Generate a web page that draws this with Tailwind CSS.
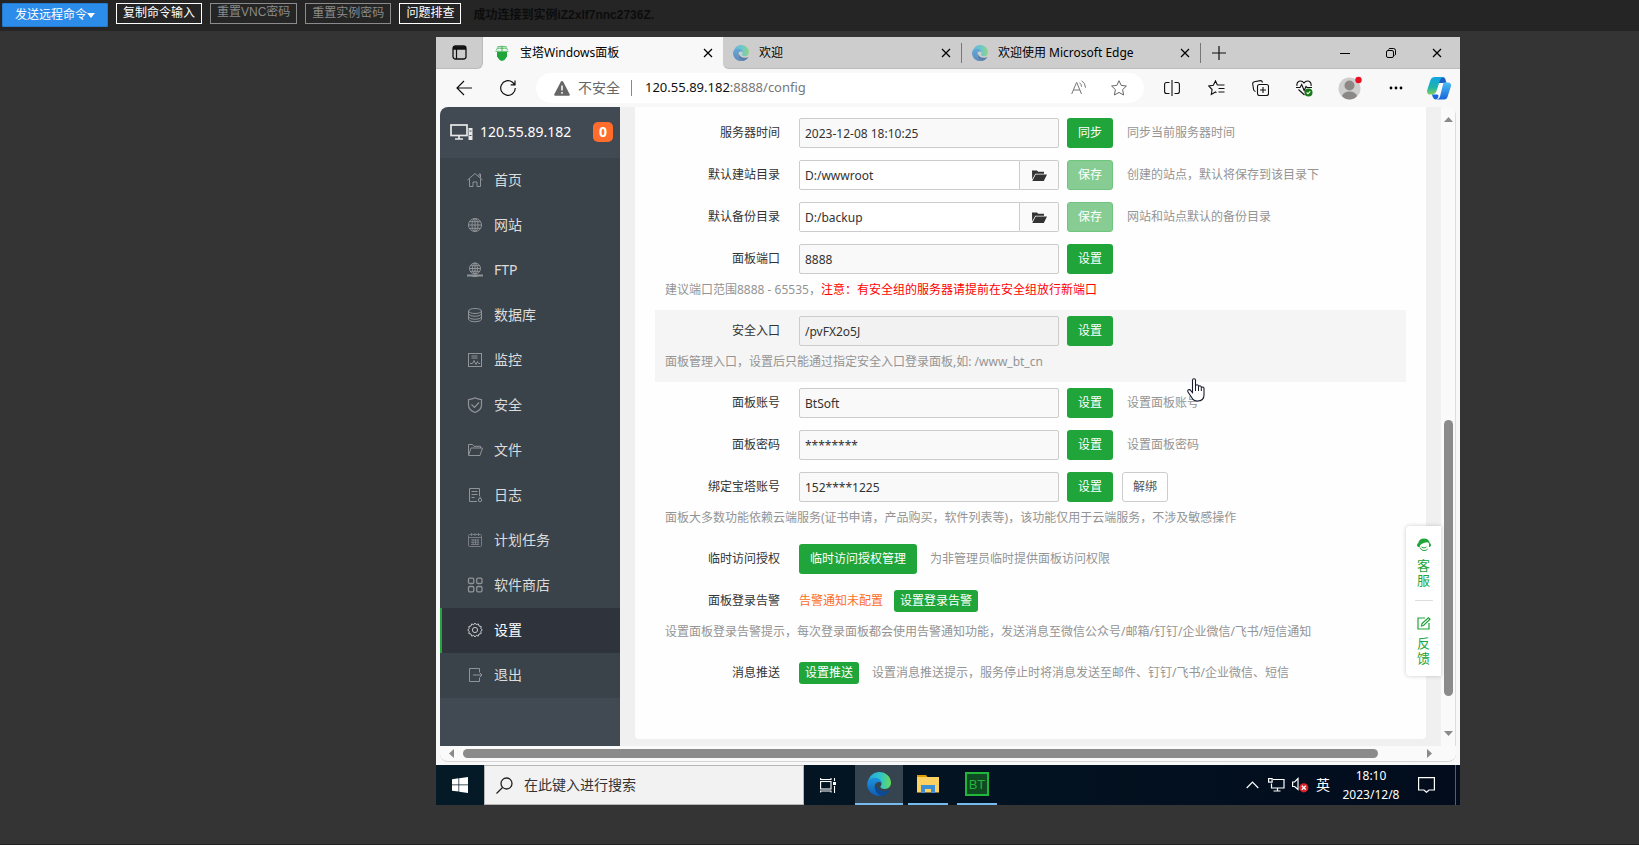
<!DOCTYPE html>
<html lang="zh-CN">
<head>
<meta charset="utf-8">
<title>远程连接 - 宝塔Windows面板</title>
<script src="https://cdn.jsdelivr.net/npm/@tailwindcss/browser@4"></script>
</head>
<body class="min-h-screen flex flex-col bg-[#343434] border-b border-[#222] font-['Noto_Sans','Noto_Sans_CJK_SC',sans-serif] text-xs text-[#333]">

<svg width="0" height="0" class="absolute" aria-hidden="true">
  <defs>
    <linearGradient id="eg1" x1="0" y1="0" x2="1" y2="0"><stop offset="0" stop-color="#2aa7e0"/><stop offset=".55" stop-color="#2fc4c8"/><stop offset="1" stop-color="#67dc55"/></linearGradient>
    <linearGradient id="eg2" x1="0" y1="0" x2="0" y2="1"><stop offset="0" stop-color="#1c93dd"/><stop offset="1" stop-color="#0f5cb4"/></linearGradient>
    <linearGradient id="cp1" x1="0" y1="0" x2="0" y2="1"><stop offset="0" stop-color="#10a5e6"/><stop offset=".6" stop-color="#1fb5a9"/><stop offset="1" stop-color="#7fcf5c"/></linearGradient>
    <linearGradient id="cp2" x1="0" y1="0" x2="0" y2="1"><stop offset="0" stop-color="#4bbdf2"/><stop offset="1" stop-color="#1664dc"/></linearGradient>
    <symbol id="edge" viewBox="0 0 24 24">
      <path fill="url(#eg1)" d="M1 9.500C2.300 4 6.700 0 12.200 0 19 0 24 5 24 10.800c0 3.600-2.700 6.200-6.200 6.200-3 0-4.400-1.300-4.400-2.200 0-.7 1.100-1.200 1.100-3 0-2.800-2.600-5-6-5C5.500 6.800 2.600 7.800 1 9.500z"/>
      <path fill="url(#eg2)" d="M.1 12.600C-.1 8.500 3.500 5.600 8 5.800c3.600.1 6.300 2.500 6.500 5.400-.7-.9-1.800-1.400-3-1.300-2.500.2-4 2.400-3.800 5 .3 4.700 3.700 7.900 7.700 9C7.700 25.300.5 20.400.1 12.600z"/>
      <path fill="#0c4a94" d="M8.300 12.300c-1.600 5.400 2 10.400 7 11.600 3-.6 5.700-2.500 7.400-5.100.3-.5-.1-.8-.6-.6-5 2.200-12.100.6-13.800-5.900z"/>
    </symbol>
    <symbol id="x" viewBox="0 0 10 10"><path d="M1 1l8 8M9 1l-8 8" fill="none" stroke="currentColor" stroke-width="1.200"/></symbol>
    <symbol id="folder-open" viewBox="0 0 16 13"><path fill="#333" d="M1 1.500h5l1.200 1.200H13v2H4.300L1.200 10.500 1 1.500zM4.700 5.600H16L12.800 12H1.300z"/></symbol>
  </defs>
</svg>

<header class="flex items-start gap-2 h-[31px] pl-[2px] pt-[3px] bg-[#252525] shrink-0 whitespace-nowrap text-white">
  <button class="flex items-center justify-center h-6 w-[106px] bg-[#2c8cea] border border-[#2579cf] rounded-[1px]">发送远程命令<svg width="8" height="5" viewBox="0 0 8 5"><path d="M0 0h8L4 5z" fill="#fff"/></svg></button>
  <button class="h-[21px] leading-[17px] pb-[2px] px-[6px] border border-white">复制命令输入</button>
  <button disabled class="h-[21px] leading-[17px] pb-[2px] px-[6px] border border-[#8a8a8a] text-[#8a8a8a] font-['Liberation_Sans','Noto_Sans_CJK_SC',sans-serif]">重置VNC密码</button>
  <button disabled class="h-[21px] leading-[17px] pb-[2px] px-[6px] border border-[#8a8a8a] text-[#8a8a8a]">重置实例密码</button>
  <button class="h-[21px] leading-[17px] pb-[2px] px-[6px] border border-white">问题排查</button>
  <p class="ml-1 leading-6 font-bold text-[#0c0c0c] font-['Liberation_Sans','Noto_Sans_CJK_SC',sans-serif]">成功连接到实例iZ2xlf7nnc2736Z.</p>
</header>

<div class="relative mt-[6px] ml-[436px] mr-[179px] flex flex-col bg-[#f8f8f8]">

  <!-- Tab strip -->
  <div class="flex h-8 bg-[#f8f8f8] text-black">
    <button aria-label="标签页操作" class="w-[47px] flex items-center justify-center bg-[#cdcdcd] rounded-br-md border-b border-r border-[#bbb]"><svg width="15" height="15" viewBox="0 0 15 15" fill="none" stroke="#111"><rect x="1" y="1" width="13" height="13" rx="2.500" stroke-width="1.300"/><path d="M1 3h13" stroke-width="3.500"/><path d="M4.500 4v10" stroke-width="1.200"/></svg></button>
    <div class="flex items-center w-60 pl-3 pr-[10px]">
      <svg width="14" height="16" viewBox="0 0 14 16"><path fill="#20a53a" d="M2 7h10v4.500L9.500 15 7 16 4.500 15 2 11.500z"/><path d="M1 4.500Q4 2 7 3.500 10 2 13 4.500M2 2.200Q5 .7 7 2 9 .7 12 2.200M.5 6.300h13M7 .500V7" fill="none" stroke="#4fb862"/></svg>
      <span class="ml-[11px] flex-1">宝塔Windows面板</span>
      <button aria-label="关闭标签页"><svg width="10" height="10"><use href="#x"/></svg></button>
    </div>
    <div class="flex items-center flex-1 bg-[#cdcdcd] rounded-bl-md border-b border-[#bbb]">
      <div class="flex items-center w-[239px] h-5 pl-[10px] pr-[10px] border-r border-[#777]">
        <svg width="16" height="16" class="opacity-60"><use href="#edge"/></svg><span class="ml-[10px] flex-1">欢迎</span>
        <button aria-label="关闭标签页"><svg width="10" height="10"><use href="#x"/></svg></button>
      </div>
      <div class="flex items-center w-[239px] h-5 pl-[10px] pr-[10px] border-r border-[#777] whitespace-nowrap">
        <svg width="16" height="16" class="opacity-60"><use href="#edge"/></svg><span class="ml-[10px] flex-1">欢迎使用 Microsoft Edge</span>
        <button aria-label="关闭标签页"><svg width="10" height="10"><use href="#x"/></svg></button>
      </div>
      <button aria-label="新建标签页" class="ml-[11px]"><svg width="14" height="14" viewBox="0 0 14 14"><path d="M7 0v14M0 7h14" stroke="#111" stroke-width="1.200"/></svg></button>
      <div class="ml-auto flex items-center gap-9 pr-[18px]">
        <button aria-label="最小化"><svg width="10" height="10"><path d="M0 5.500h10" stroke="#000"/></svg></button>
        <button aria-label="还原"><svg width="10" height="10" viewBox="0 0 10 10" fill="none" stroke="#000"><rect x=".5" y="2.500" width="7" height="7" rx="1.500"/><path d="M2.500 1.500q.3-1 1.500-1h3.500q2 0 2 2V6q0 1-1 1.500"/></svg></button>
        <button aria-label="关闭"><svg width="10" height="10"><use href="#x"/></svg></button>
      </div>
    </div>
  </div>

  <!-- Address bar -->
  <div class="flex items-center h-[38px] pr-[9px] text-[#111]">
    <button aria-label="返回" class="ml-5"><svg width="16" height="16" viewBox="0 0 16 16" fill="none" stroke="currentColor" stroke-width="1.200"><path d="M16 8H1M8 1L1 8l7 7"/></svg></button>
    <button aria-label="刷新" class="ml-7"><svg width="16" height="16" viewBox="0 0 16 16" fill="none" stroke="currentColor" stroke-width="1.200"><path d="M15.300 8A7.300 7.300 0 1 1 12.500 2.300L14.700 4.500M15 .5v4.300h-4.300"/></svg></button>
    <div class="flex items-center flex-1 ml-5 h-[30px] rounded-full bg-white pl-[18px] pr-[17px]">
      <svg width="16" height="15" viewBox="0 0 16 15"><path d="M8 0q.8 0 1.200.7l6.500 12.500q.5 1.300-.9 1.600H1.200Q-.2 14.500.3 13.200L6.800.7Q7.200 0 8 0z" fill="#666"/><path d="M8 4.500v5M8 11v1.700" stroke="#fff" stroke-width="1.500"/></svg>
      <span class="ml-2 text-sm text-[#666]">不安全</span>
      <span class="ml-[11px] w-px h-4 bg-[#888]"></span>
      <div role="textbox" aria-label="地址" class="ml-[13px] flex-1 text-[13px]">120.55.89.182<span class="text-[#777]">:8888/config</span></div>
      <button aria-label="朗读此页内容"><svg width="16" height="16" viewBox="0 0 16 16" fill="none" stroke="#777"><path d="M.7 14L5.500 2.500h.3L10.500 14M2.300 10H9M8.500 2.700q2 1.500 2 4M10.500.7q4 2.500 4 7"/></svg></button>
      <button aria-label="收藏" class="ml-6"><svg width="16" height="16" viewBox="0 0 16 16" fill="none" stroke="#666" stroke-linejoin="round"><path d="M8 .7l2.200 4.700 5.200.6-3.800 3.600 1 5.400L8 12.400 3.400 15l1-5.400L.6 6l5.200-.6z"/></svg></button>
    </div>
    <div class="flex items-center gap-7 ml-5 shrink-0">
      <button aria-label="拆分屏幕"><svg width="16" height="16" viewBox="0 0 16 16" fill="none" stroke="currentColor" stroke-width="1.100"><path d="M8 0v16M5.500 2.500h-3q-1.900 0-1.900 2v7q0 2 1.900 2h3M10.500 2.500h3q1.900 0 1.900 2v7q0 2-1.900 2h-3"/></svg></button>
      <button aria-label="收藏夹"><svg width="17" height="16" viewBox="0 0 17 16" fill="none" stroke="currentColor" stroke-width="1.100"><path d="M9.500 5.300L7.500.9 5.300 5.300.7 6l3.400 3.500-.8 5L7.500 12l1 .6M9.500 5h7M10.500 8.500h6M10.500 12h6"/></svg></button>
      <button aria-label="集锦" class="-ml-px"><svg width="17" height="16" viewBox="0 0 17 16" fill="none" stroke="currentColor" stroke-width="1.100"><rect x="5.500" y="4.500" width="11" height="11" rx="2"/><path d="M11 7v6M8 10h6M3.500 11.500Q1.800 11 1.600 9.500L.7 4Q.5 2.200 2.300 1.800L8.500.6q1.500-.1 2 1.900"/></svg></button>
      <button aria-label="浏览器概要" class="-ml-px mr-[2px]"><svg width="17" height="17" viewBox="0 0 17 17" fill="none" stroke="currentColor" stroke-width="1.100"><path d="M1 6Q.3 2.500 3 1.200 6 .2 8 3 10 .2 13 1.200q2.700 1.300 2 4.800M0 7.500h4l1.700-3 2.500 6 1.800-4 1 1h5M2.500 9.500L8.500 15"/><circle cx="12.500" cy="12.500" r="4" fill="#177a17" stroke="none"/><path d="M10.700 12.500l1.300 1.300 2.300-2.500" stroke="#fff"/></svg></button>
      <button aria-label="用户" class="-ml-[5px] -mr-px"><svg width="24" height="24" viewBox="0 0 24 24"><circle cx="11.500" cy="12.500" r="11" fill="#d0cecc"/><circle cx="11.500" cy="9.500" r="5" fill="#8b8886"/><path d="M4 20q1.500-4.500 7.500-4.500T19 20q-3 3.500-7.500 3.500T4 20z" fill="#8b8886"/><circle cx="20.500" cy="4" r="3.200" fill="#e81123"/></svg></button>
      <button aria-label="设置及其他"><svg width="14" height="4"><circle cx="2" cy="2" r="1.400"/><circle cx="7" cy="2" r="1.400"/><circle cx="12" cy="2" r="1.400"/></svg></button>
      <button aria-label="Copilot" class="-ml-1"><svg width="24" height="23" viewBox="0 0 24 23"><path fill="#1b5fc4" d="M12 0h4q1.700.3 2.300 2l1.200 4H12z"/><path fill="url(#cp2)" d="M16.500 5.500h5Q24.500 6 24 9l-3.500 11q-.8 2.500-3.500 2.500H9q3 0 4-3z"/><path fill="url(#cp1)" d="M8 0h9q-3.300.5-4.300 4L9.500 14q-.8 3-3.500 3.500H2.500Q-.5 17 .2 13L3.500 3Q4.500 0 8 0z"/><path fill="#1667dd" d="M5 17.500h5q2 0 1.300 2.500-.8 2.500-3 2.500Q6 22 5 17.500z"/></svg></button>
    </div>
  </div>

  <!-- Page viewport -->
  <div class="mx-1 mb-1 rounded-lg overflow-hidden border-b border-[#d5d5d5] bg-[#fafafa]">
    <div class="flex">
      <nav class="w-[180px] shrink-0 bg-[#414953] text-sm text-[#dcdcdc]">
        <div class="flex items-center h-[51px] pb-[2px] pl-[10px] pr-[7px] text-white">
          <svg width="23" height="16" viewBox="0 0 23 16" fill="none" stroke="#e8e8e8" stroke-width="1.700"><rect x="1" y="1" width="16" height="10.500"/><path d="M9 11.500V15M5 15h8"/><rect x="18.500" y="4" width="4" height="12" fill="#e8e8e8" stroke="none"/><path d="M19.500 7h2M19.500 11.500h2" stroke="#414953" stroke-width="1"/></svg>
          <span class="ml-[7px]">120.55.89.182</span>
          <span class="ml-auto w-5 h-5 rounded-[5px] bg-[#ff6c2b] text-center leading-5 font-bold">0</span>
        </div>
        <ul class="bg-[#3b434a]">
          <li><a href="#home" class="flex items-center gap-[11px] h-[45px] pb-[2px] pl-[27px]"><svg width="16" height="16" viewBox="0 0 16 16" fill="none" stroke="#8f9498"><path d="M.5 8L8 1.500 15.500 8M2.500 7v7.500h3.500V10h4v4.500h3.500V7M12 4.500V2h1.500v4"/></svg>首页</a></li>
          <li><a href="#site" class="flex items-center gap-[11px] h-[45px] pb-[2px] pl-[27px]"><svg width="16" height="16" viewBox="0 0 16 16" fill="none" stroke="#8f9498"><circle cx="8" cy="8" r="6.500"/><ellipse cx="8" cy="8" rx="3" ry="6.500"/><path d="M8 1.500v13M1.500 8h13M2.500 4.700h11M2.500 11.300h11"/></svg>网站</a></li>
          <li><a href="#ftp" class="flex items-center gap-[11px] h-[45px] pb-[2px] pl-[27px]"><svg width="16" height="16" viewBox="0 0 16 16" fill="none" stroke="#8f9498"><circle cx="8" cy="6.500" r="5.500"/><ellipse cx="8" cy="6.500" rx="2.500" ry="5.500"/><path d="M8 1v11M2.500 6.500h11M3.500 3.700h9M3.500 9.300h9"/><path d="M0 13.500h16M5.500 14h5" stroke-width="1.800"/></svg>FTP</a></li>
          <li><a href="#database" class="flex items-center gap-[11px] h-[45px] pb-[2px] pl-[27px]"><svg width="16" height="16" viewBox="0 0 16 16" fill="none" stroke="#8f9498"><ellipse cx="8" cy="4" rx="6.500" ry="2.500"/><path d="M1.500 4v8.500Q3 14.800 8 14.800t6.500-2.300V4M1.500 7Q3 9.300 8 9.300T14.500 7M1.500 10Q3 12.300 8 12.300t6.500-2.300"/></svg>数据库</a></li>
          <li><a href="#control" class="flex items-center gap-[11px] h-[45px] pb-[2px] pl-[27px]"><svg width="16" height="16" viewBox="0 0 16 16" fill="none" stroke="#8f9498"><rect x="1.500" y="1.500" width="13" height="13"/><path d="M4.500 4h6M4.500 6h6M3 11.500h2.500l1.500-3 2 4 1.500-3 1 2H13"/></svg>监控</a></li>
          <li><a href="#firewall" class="flex items-center gap-[11px] h-[45px] pb-[2px] pl-[27px]"><svg width="16" height="16" viewBox="0 0 16 16" fill="none" stroke="#8f9498" stroke-width="1.200"><path d="M8 .7l2 1 4.500 1V8q0 5-6.500 7.500Q1.500 13 1.500 8V2.700L6 1.700zM4.500 7.500l3 3L12 5.500"/></svg>安全</a></li>
          <li><a href="#files" class="flex items-center gap-[11px] h-[45px] pb-[2px] pl-[27px]"><svg width="16" height="16" viewBox="0 0 16 16" fill="none" stroke="#8f9498"><path d="M1.500 13V2.500h4L7 4.300h6.500V6M1.500 13.500L4 6h11.500L13 13.500z"/></svg>文件</a></li>
          <li><a href="#logs" class="flex items-center gap-[11px] h-[45px] pb-[2px] pl-[27px]"><svg width="16" height="16" viewBox="0 0 16 16" fill="none" stroke="#8f9498"><path d="M10 14.500H2.500v-13h10V9M4.500 4.500h6M4.500 7.500h6M4.500 10.500h3"/><circle cx="13" cy="13" r="1.700"/><path d="M13 9.500v1.500"/></svg>日志</a></li>
          <li><a href="#crontab" class="flex items-center gap-[11px] h-[45px] pb-[2px] pl-[27px]"><svg width="16" height="16" viewBox="0 0 16 16" fill="none" stroke="#777d82"><rect x="1.500" y="2.500" width="13" height="12" rx="1"/><path d="M1.500 5.500h13M4.500 1v3M11.500 1v3M8 1v3M4 8h8M4 10.300h8M4 12.500h8M6 7v6M8.500 7v6M11 7v6"/></svg>计划任务</a></li>
          <li><a href="#soft" class="flex items-center gap-[11px] h-[45px] pb-[2px] pl-[27px]"><svg width="16" height="16" viewBox="0 0 16 16" fill="none" stroke="#8f9498" stroke-width="1.300"><rect x="1.500" y="1.200" width="5.300" height="5.300" rx="1.300"/><rect x="9.700" y="1.200" width="5.300" height="5.300" rx="1.300"/><rect x="1.500" y="9.500" width="5.300" height="5.300" rx="1.300"/><rect x="9.700" y="9.500" width="5.300" height="5.300" rx="1.300"/></svg>软件商店</a></li>
          <li><a href="#config" aria-current="page" class="flex items-center gap-[11px] h-[45px] pb-[2px] pl-[25px] border-l-2 border-[#20a53a] bg-[#2f343c] text-white"><svg width="16" height="16" viewBox="0 0 16 16" fill="none" stroke="#c5c8ca"><path d="M8 1l1.300 1.700 2-.8.700 2.100 2.200.5-.4 2.200L15.300 8l-1.500 1.300.4 2.200-2.200.5-.7 2.100-2-.8L8 15l-1.300-1.700-2 .8L4 12l-2.200-.5.4-2.200L.7 8l1.500-1.300-.4-2.200L4 4l.7-2.100 2 .8z"/><circle cx="8" cy="8" r="2.600"/></svg>设置</a></li>
          <li><a href="#exit" class="flex items-center gap-[11px] h-[45px] pb-[2px] pl-[27px]"><svg width="16" height="16" viewBox="0 0 16 16" fill="none" stroke="#8f9498"><path d="M12.500 5V1.500h-10v13h10V11M6 8h9M12.500 5.500L15 8l-2.500 2.500"/></svg>退出</a></li>
        </ul>
      </nav>

      <div class="relative flex-1 min-w-0 bg-[#f0f0f0] pl-[15px] pr-[15px] pb-[7px] flex">
        <form class="flex-1 min-w-0 bg-[#fefefe] rounded-b px-5 pt-[5px] pb-[45px] leading-5 text-[#333] whitespace-nowrap">
          <div class="flex items-center h-[42px]">
            <label for="time" class="w-[125px] mr-[19px] text-right">服务器时间</label>
            <input id="time" readonly value="2023-12-08 18:10:25" class="w-[260px] h-[30px] px-[5px] border border-[#ccc] rounded-[2px] bg-[#f9f9f9]">
            <button type="button" class="ml-2 h-[30px] w-[46px] rounded-[3px] bg-[#20a53a] text-white">同步</button>
            <span class="ml-[14px] text-[#949494]">同步当前服务器时间</span>
          </div>
          <div class="flex items-center h-[42px]">
            <label for="www" class="w-[125px] mr-[19px] text-right">默认建站目录</label>
            <input id="www" value="D:/wwwroot" class="w-[221px] h-[30px] px-[5px] border border-[#ccc] rounded-l-[2px] bg-white">
            <button type="button" aria-label="选择目录" class="w-[39px] h-[30px] flex items-center justify-center border border-l-0 border-[#ccc] rounded-r-[2px] bg-[#fafafa]"><svg width="16" height="13"><use href="#folder-open"/></svg></button>
            <button type="button" class="ml-2 h-[30px] w-[46px] rounded-[3px] bg-[#87cd93] border border-[#6fc57e] text-white">保存</button>
            <span class="ml-[14px] text-[#949494]">创建的站点，默认将保存到该目录下</span>
          </div>
          <div class="flex items-center h-[42px]">
            <label for="backup" class="w-[125px] mr-[19px] text-right">默认备份目录</label>
            <input id="backup" value="D:/backup" class="w-[221px] h-[30px] px-[5px] border border-[#ccc] rounded-l-[2px] bg-white">
            <button type="button" aria-label="选择目录" class="w-[39px] h-[30px] flex items-center justify-center border border-l-0 border-[#ccc] rounded-r-[2px] bg-[#fafafa]"><svg width="16" height="13"><use href="#folder-open"/></svg></button>
            <button type="button" class="ml-2 h-[30px] w-[46px] rounded-[3px] bg-[#87cd93] border border-[#6fc57e] text-white">保存</button>
            <span class="ml-[14px] text-[#949494]">网站和站点默认的备份目录</span>
          </div>
          <div class="flex items-center h-[42px]">
            <label for="port" class="w-[125px] mr-[19px] text-right">面板端口</label>
            <input id="port" readonly value="8888" class="w-[260px] h-[30px] px-[5px] border border-[#ccc] rounded-[2px] bg-[#f9f9f9]">
            <button type="button" class="ml-2 h-[30px] w-[46px] rounded-[3px] bg-[#20a53a] text-white">设置</button>
          </div>
          <p class="pl-[10px] h-[30px] text-[#949494]">建议端口范围8888 - 65535，<span class="text-[#f00]">注意：有安全组的服务器请提前在安全组放行新端口</span></p>
          <div class="bg-[#f5f5f5]">
            <div class="flex items-center h-[42px]">
              <label for="entry" class="w-[125px] mr-[19px] text-right">安全入口</label>
              <input id="entry" readonly value="/pvFX2o5J" class="w-[260px] h-[30px] px-[5px] border border-[#ccc] rounded-[2px] bg-[#f2f2f2]">
              <button type="button" class="ml-2 h-[30px] w-[46px] rounded-[3px] bg-[#20a53a] text-white">设置</button>
            </div>
            <p class="pl-[10px] h-[30px] text-[#949494]">面板管理入口，设置后只能通过指定安全入口登录面板,如: /www_bt_cn</p>
          </div>
          <div class="flex items-center h-[42px]">
            <label for="user" class="w-[125px] mr-[19px] text-right">面板账号</label>
            <input id="user" readonly value="BtSoft" class="w-[260px] h-[30px] px-[5px] border border-[#ccc] rounded-[2px] bg-[#f9f9f9]">
            <button type="button" class="ml-2 h-[30px] w-[46px] rounded-[3px] bg-[#20a53a] text-white">设置</button>
            <span class="ml-[14px] text-[#949494]">设置面板账号</span>
          </div>
          <div class="flex items-center h-[42px]">
            <label for="pass" class="w-[125px] mr-[19px] text-right">面板密码</label>
            <input id="pass" readonly value="********" class="w-[260px] h-[30px] px-[5px] border border-[#ccc] rounded-[2px] bg-[#f9f9f9]">
            <button type="button" class="ml-2 h-[30px] w-[46px] rounded-[3px] bg-[#20a53a] text-white">设置</button>
            <span class="ml-[14px] text-[#949494]">设置面板密码</span>
          </div>
          <div class="flex items-center h-[42px]">
            <label for="bind" class="w-[125px] mr-[19px] text-right">绑定宝塔账号</label>
            <input id="bind" readonly value="152****1225" class="w-[260px] h-[30px] px-[5px] border border-[#ccc] rounded-[2px] bg-[#f9f9f9]">
            <button type="button" class="ml-2 h-[30px] w-[46px] rounded-[3px] bg-[#20a53a] text-white">设置</button>
            <button type="button" class="ml-[9px] h-[30px] w-[46px] rounded-[3px] border border-[#ccc] bg-white text-[#555]">解绑</button>
          </div>
          <p class="pl-[10px] h-[30px] text-[#949494]">面板大多数功能依赖云端服务(证书申请，产品购买，软件列表等)，该功能仅用于云端服务，不涉及敏感操作</p>
          <div class="flex items-center h-[42px]">
            <span class="w-[125px] mr-[19px] text-right">临时访问授权</span>
            <button type="button" class="h-[30px] px-[11px] rounded-[3px] bg-[#20a53a] text-white">临时访问授权管理</button>
            <span class="ml-[13px] text-[#949494]">为非管理员临时提供面板访问权限</span>
          </div>
          <div class="flex items-center h-[42px]">
            <span class="w-[125px] mr-[19px] text-right">面板登录告警</span>
            <a href="#alarm" class="text-[#fc6d26]">告警通知未配置</a>
            <button type="button" class="ml-[11px] h-[22px] px-[6px] rounded-[3px] bg-[#20a53a] text-white">设置登录告警</button>
          </div>
          <p class="pl-[10px] h-[30px] text-[#949494]">设置面板登录告警提示，每次登录面板都会使用告警通知功能，发送消息至微信公众号/邮箱/钉钉/企业微信/飞书/短信通知</p>
          <div class="flex items-center h-[42px]">
            <span class="w-[125px] mr-[19px] text-right">消息推送</span>
            <button type="button" class="h-[22px] px-[6px] rounded-[3px] bg-[#20a53a] text-white">设置推送</button>
            <span class="ml-[13px] text-[#949494]">设置消息推送提示，服务停止时将消息发送至邮件、钉钉/飞书/企业微信、短信</span>
          </div>
        </form>

        <!-- Floating help panel -->
        <aside class="absolute right-0 bottom-[70px] w-[35px] h-[150px] flex flex-col items-center bg-white rounded-l shadow-[0_0_4px_rgba(0,0,0,0.2)] text-[13px] leading-[15px] text-[#20a53a]">
          <a href="#service" class="flex flex-col items-center w-[14px] pt-3"><svg width="14" height="14" viewBox="0 0 14 14"><path fill="#20a53a" d="M7 .5c3.300 0 5.400 2 5.800 4.700q1.200.3 1.200 1.800t-1.400 1.900l-.8.100q1-4-1.300-4.700Q7 4.500 4.500 6 2.700 7 2.700 9L1.300 9Q0 8.500 0 7t1.200-1.800C1.700 2.500 3.700.5 7 .5z"/><path d="M3 9.500Q4.300 12.600 7 12.600q2.300 0 3.700-1.600M4.500 9q2.500 2 5 0" fill="none" stroke="#20a53a"/></svg><span class="mt-[6px] w-[13px] whitespace-normal break-all">客服</span></a>
          <span class="mt-3 w-[18px] h-px bg-[#ddd] shrink-0"></span>
          <a href="#feedback" class="flex flex-col items-center w-[14px] pt-4"><svg width="14" height="13" viewBox="0 0 14 13" fill="none" stroke="#20a53a" stroke-width="1.200"><path d="M8 1H1v11h11V6M5 6.500L11.500.8l1.500 1.500L6.500 8.500l-2 .5z"/></svg><span class="mt-[6px] w-[13px] whitespace-normal break-all">反馈</span></a>
        </aside>
      </div>

      <!-- Vertical scrollbar -->
      <div class="w-[15px] shrink-0 flex flex-col items-center pt-[10px] pb-[10px] bg-[#fafafa] border-r border-[#ddd]">
        <svg width="9" height="5"><path d="M0 5L4.500 0 9 5z" fill="#8a8a8a"/></svg>
        <div class="mt-[298px] h-[276px] w-[9px] rounded-full bg-[#8b8b8b]"></div>
        <svg class="mt-auto" width="9" height="5"><path d="M0 0h9L4.500 5z" fill="#8a8a8a"/></svg>
      </div>
    </div>
    <!-- Horizontal scrollbar -->
    <div class="flex items-center h-[15px] pl-[9px] pr-6">
      <svg width="5" height="9"><path d="M5 0v9L0 4.500z" fill="#8a8a8a"/></svg>
      <div class="ml-[9px] mr-[49px] flex-1 h-[9px] rounded-full bg-[#8b8b8b]"></div>
      <svg width="5" height="9"><path d="M0 0v9l5-4.500z" fill="#8a8a8a"/></svg>
    </div>
  </div>

  <!-- Taskbar -->
  <footer class="flex h-10 -mt-px bg-linear-to-r from-[#041a26] to-[#020c1c] text-white">
    <button aria-label="开始" class="w-12 flex items-center justify-center"><svg width="16" height="16" viewBox="0 0 16 16" fill="#fff"><path d="M0 2.200L6.500 1.300v6.200H0zM7.200 1.200L16 0v7.500H7.200zM0 8.300h6.500v6.200L0 13.700zM7.200 8.300H16V16l-8.800-1.300z"/></svg></button>
    <label class="flex items-center w-80 pl-[11px] bg-[#f2f2f2] border border-[#b5b5b5]">
      <svg width="17" height="17" viewBox="0 0 17 17" fill="none" stroke="#222" stroke-width="1.300"><circle cx="10.500" cy="6.500" r="5.500"/><path d="M6.500 10.500L.5 16.500"/></svg>
      <input aria-label="搜索" placeholder="在此键入进行搜索" class="ml-[11px] min-w-0 flex-1 text-sm placeholder:text-[#333]">
    </label>
    <button aria-label="任务视图" class="ml-4 flex items-center"><svg width="17" height="16" viewBox="0 0 17 16" fill="none" stroke="#fff" stroke-width="1.100"><rect x=".6" y="4.500" width="10.400" height="7.500"/><path d="M.6 1v1.500H11V1M.6 15.500V14H11v1.500M14.500 1v3M14.500 9v7"/><path d="M13 5h3v3h-3z" fill="#fff" stroke="none"/></svg></button>
    <button aria-label="Microsoft Edge" class="ml-[18px] w-12 flex items-center justify-center bg-[#35444e] border-b-2 border-[#76b9ed]"><svg width="24" height="24"><use href="#edge"/></svg></button>
    <button aria-label="文件资源管理器" class="ml-[5px] w-10 flex items-center justify-center border-b-2 border-[#76b9ed]"><svg width="22" height="19" viewBox="0 0 22 19"><path d="M0 0h9l1.500 2H0z" fill="#e09a00"/><path d="M0 2h22v15.500H0z" fill="#fdd263"/><path d="M4 18V10h14v8h-4v-4H8v4z" fill="#3d8fd6"/></svg></button>
    <button aria-label="宝塔" class="ml-[9px] w-10 flex items-center justify-center border-b-2 border-[#76b9ed]"><span class="flex items-center justify-center w-6 h-6 border-2 border-[#22b53c] bg-[#0f4a22] text-[#22b53c] text-[13px] leading-none font-['Liberation_Sans']">BT</span></button>
    <div class="ml-auto flex items-center">
      <button aria-label="显示隐藏的图标"><svg width="13" height="8" viewBox="0 0 13 8"><path d="M.7 7L6.500 1.200 12.300 7" fill="none" stroke="#fff" stroke-width="1.200"/></svg></button>
      <svg class="ml-[9px]" width="17" height="14" viewBox="0 0 17 14" fill="none" stroke="#fff" stroke-width="1.200"><path d="M5 1.500h11v8.500H3.500V5.500M9.500 10v3M5.500 13h7"/><rect x=".6" y=".6" width="3.500" height="3.500"/></svg>
      <svg class="ml-[7px]" width="17" height="16" viewBox="0 0 17 16"><path d="M.6 5h2L6 1.500v11L2.600 9.500h-2z" fill="none" stroke="#fff" stroke-width="1.200"/><circle cx="11.800" cy="10.800" r="4.600" fill="#d9222a"/><path d="M9.800 8.800l4 4M13.800 8.800l-4 4" stroke="#fff" stroke-width="1.300"/></svg>
      <span class="ml-[7px] text-sm">英</span>
      <div class="ml-[10px] w-[62px] text-center leading-[19px]">18:10<br>2023/12/8</div>
      <button aria-label="操作中心" class="ml-4"><svg width="17" height="16" viewBox="0 0 17 16"><path d="M.6.600h15.800V13H11l-2.500 2.300L6 13H.6z" fill="none" stroke="#fff" stroke-width="1.200"/></svg></button>
      <span class="ml-5 mr-1 w-px h-10 bg-[#55606a]"></span>
    </div>
  </footer>

  <!-- Hand pointer -->
  <svg class="absolute left-[751px] top-[341px]" width="18" height="24" viewBox="0 0 18 24"><path d="M5.500 14.500V2.200q0-1.500 1.500-1.500T8.500 2.200V8q.3-1.200 1.500-1.200T11.500 8v.8q.3-1 1.400-1t1.400 1.200v.8q.3-.8 1.400-.8 1.300 0 1.300 1.500v6.500q0 6-6.500 6-4 0-5.500-3L1 14q-.7-1.500.5-2.200 1.500-.5 2.500 1z" fill="#fff" stroke="#1a1a2e" stroke-width="1.100"/><path d="M8.500 8v5M11.500 9v4M14.300 10v3" stroke="#1a1a2e"/></svg>
</div>
</body>
</html>
